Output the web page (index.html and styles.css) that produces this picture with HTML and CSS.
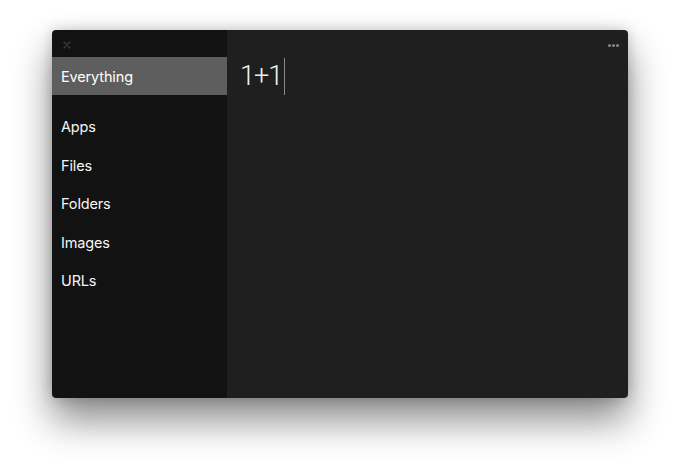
FILE: index.html
```html
<!DOCTYPE html>
<html>
<head>
<meta charset="utf-8">
<link rel="stylesheet" href="styles.css">
</head>
<body>
<div class="stage">
  <div class="window">
    <aside class="sidebar">
      <div class="topbar">
        <svg class="close" width="8" height="8" viewBox="0 0 8 8"><path d="M1 1L7 7M7 1L1 7" stroke="#3c3c3c" stroke-width="1.3" stroke-linecap="round"/></svg>
      </div>
      <div class="item active">Everything</div>
      <div class="spacer"></div>
      <div class="item">Apps</div>
      <div class="item">Files</div>
      <div class="item">Folders</div>
      <div class="item">Images</div>
      <div class="item">URLs</div>
    </aside>
    <main class="main">
      <div class="mainbar">
        <span class="dot"></span><span class="dot"></span><span class="dot"></span>
      </div>
      <div class="query"><span class="qtext">1+1</span><span class="caret"></span></div>
    </main>
  </div>
</div>
</body>
</html>
```
FILE: styles.css
```css
html, body {
  margin: 0;
  padding: 0;
  background: #ffffff;
  width: 680px;
  height: 472px;
  overflow: hidden;
}
.stage {
  padding: 30px 0 0 52px;
}
.window {
  width: 576px;
  height: 368px;
  display: flex;
  border-radius: 4px;
  overflow: hidden;
  box-shadow: 0 22px 38px rgba(0,0,0,0.46), 0 0 14px rgba(0,0,0,0.2);
  font-family: "Inter", "Liberation Sans", sans-serif;
}
.sidebar {
  width: 175px;
  background: #121212;
  display: flex;
  flex-direction: column;
}
.topbar {
  height: 27px;
  display: flex;
  align-items: center;
  padding-left: 11px;
  padding-top: 3px;
  box-sizing: border-box;
}
.item {
  height: 38.5px;
  display: flex;
  align-items: center;
  padding-left: 9px;
  color: #f6f6f6;
  font-size: 14.5px;
  letter-spacing: -0.15px;
}
.item.active {
  height: 38px;
  background: #5e5e5e;
  color: #ffffff;
}
.spacer {
  height: 12.5px;
}
.main {
  flex: 1;
  background: #1f1f1f;
  display: flex;
  flex-direction: column;
}
.mainbar {
  height: 27px;
  display: flex;
  justify-content: flex-end;
  align-items: center;
  gap: 1px;
  padding-right: 9px;
  padding-top: 3px;
  box-sizing: border-box;
}
.dot {
  width: 3px;
  height: 3px;
  border-radius: 50%;
  background: #858585;
}
.query {
  height: 38px;
  display: flex;
  align-items: center;
  padding-left: 13px;
}
.qtext {
  font-family: "Roboto", "Liberation Sans", sans-serif;
  font-weight: 300;
  font-size: 27px;
  color: #f0f0f0;
  letter-spacing: -1px;
}
.caret {
  width: 1px;
  height: 37px;
  background: #8a8a8a;
  margin-left: 2px;
}
```
